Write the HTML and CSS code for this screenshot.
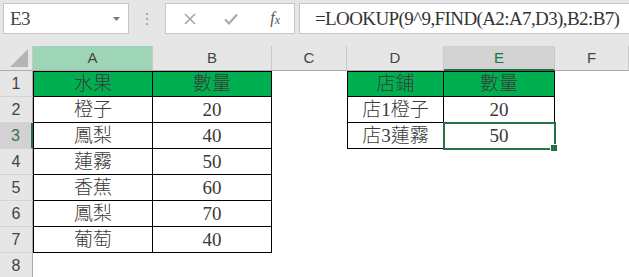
FILE: index.html
```html
<!DOCTYPE html>
<html lang="zh-Hant">
<head>
	<meta charset="UTF-8">
	<title>LOOKUP</title>
	<link rel="stylesheet" href="styles.css">
</head>
<body>
	<div class="topbar">
		<div class="namebox">
			<span class="ref">E3</span>
			<svg class="drop" width="7" height="4" viewBox="0 0 7 4"><path d="M0 0H7L3.5 4Z" fill="#7a7a7a"/></svg>
		</div>
		<div class="grip"><i></i><i></i><i></i></div>
		<div class="fbtns">
			<svg width="12" height="12" viewBox="0 0 12 12"><path d="M1 1L11 11M11 1L1 11" stroke="#a6a6a6" stroke-width="1.6"/></svg>
			<svg width="14" height="12" viewBox="0 0 14 12"><path d="M1 6.5L5 10.5L13 1.5" stroke="#a6a6a6" stroke-width="2" fill="none"/></svg>
			<span class="fx">f<sub>x</sub></span>
		</div>
		<div class="formula">=LOOKUP(9^9,FIND(A2:A7,D3),B2:B7)</div>
	</div>

	<div class="sheet">
		<!-- 欄標題 -->
		<div class="corner"><svg width="18" height="18" viewBox="0 0 18 18"><path d="M18 0V18H0Z" fill="#b5b5b5"/></svg></div>
		<div class="colhd sel-a">A</div>
		<div class="colhd">B</div>
		<div class="colhd">C</div>
		<div class="colhd">D</div>
		<div class="colhd cur">E</div>
		<div class="colhd">F</div>

		<!-- 1 -->
		<div class="rowhd">1</div>
		<div class="cell t l top head">水果</div>
		<div class="cell t top head">數量</div>
		<div class="cell"></div>
		<div class="cell t l top head">店鋪</div>
		<div class="cell t top head">數量</div>
		<div class="cell"></div>

		<!-- 2 -->
		<div class="rowhd">2</div>
		<div class="cell t l">橙子</div>
		<div class="cell t">20</div>
		<div class="cell"></div>
		<div class="cell t l">店1橙子</div>
		<div class="cell t">20</div>
		<div class="cell"></div>

		<!-- 3 -->
		<div class="rowhd cur">3</div>
		<div class="cell t l">鳳梨</div>
		<div class="cell t">40</div>
		<div class="cell"></div>
		<div class="cell t l">店3蓮霧</div>
		<div class="cell t active">50</div>
		<div class="cell"></div>

		<!-- 4 -->
		<div class="rowhd">4</div>
		<div class="cell t l">蓮霧</div>
		<div class="cell t">50</div>
		<div class="cell"></div>
		<div class="cell"></div>
		<div class="cell"></div>
		<div class="cell"></div>

		<!-- 5 -->
		<div class="rowhd">5</div>
		<div class="cell t l">香蕉</div>
		<div class="cell t">60</div>
		<div class="cell"></div>
		<div class="cell"></div>
		<div class="cell"></div>
		<div class="cell"></div>

		<!-- 6 -->
		<div class="rowhd">6</div>
		<div class="cell t l">鳳梨</div>
		<div class="cell t">70</div>
		<div class="cell"></div>
		<div class="cell"></div>
		<div class="cell"></div>
		<div class="cell"></div>

		<!-- 7 -->
		<div class="rowhd">7</div>
		<div class="cell t l">葡萄</div>
		<div class="cell t">40</div>
		<div class="cell"></div>
		<div class="cell"></div>
		<div class="cell"></div>
		<div class="cell"></div>

		<!-- 8 -->
		<div class="rowhd">8</div>
		<div class="cell"></div>
		<div class="cell"></div>
		<div class="cell"></div>
		<div class="cell"></div>
		<div class="cell"></div>
		<div class="cell"></div>
	</div>
</body>
</html>
```

FILE: styles.css
```css
*{
	padding: 0;
	margin: 0;
	box-sizing: border-box;
}
body{
	background: #fff;
	overflow: hidden;
	font-family: "Liberation Serif", "Noto Sans CJK TC", serif;
}

/* 公式列 */
.topbar{
	height: 46px;
	background: #e6e6e6;
	display: flex;
	align-items: flex-start;
	padding: 3px 0 0 3px;
}
.namebox{
	width: 126px;
	height: 31px;
	background: #fff;
	border: 1px solid #c6c6c6;
	display: flex;
	align-items: center;
	justify-content: space-between;
	padding: 0 8px 0 6px;
}
.ref{
	font-size: 19px;
	color: #444;
	letter-spacing: -0.5px;
}
.grip{
	width: 36px;
	height: 31px;
	display: flex;
	flex-direction: column;
	align-items: center;
	justify-content: center;
	gap: 3px;
}
.grip i{
	display: block;
	width: 2px;
	height: 2px;
	background: #a8a8a8;
}
.fbtns{
	width: 130px;
	height: 31px;
	background: #fff;
	border: 1px solid #c6c6c6;
	display: flex;
	align-items: center;
	padding: 0 14px 0 18px;
	gap: 28px;
}
.fx{
	margin-left: auto;
	font-style: italic;
	font-size: 16px;
	color: #555;
	font-family: "Liberation Serif", serif;
}
.fx sub{
	font-size: 12px;
	vertical-align: -1px;
}
.formula{
	flex: 1;
	height: 31px;
	margin-left: 4px;
	background: #fff;
	border: 1px solid #c6c6c6;
	border-right: 0;
	padding-left: 15px;
	font-size: 19px;
	line-height: 29px;
	letter-spacing: -0.6px;
	color: #333;
	white-space: nowrap;
}

/* 工作表 */
.sheet{
	display: grid;
	grid-template-columns: 33px 120px 119px 75px 97px 111px 1fr;
	grid-template-rows: 25px;
	grid-auto-rows: 26px;
}
.corner{
	background: #e6e6e6;
	border-right: 1px solid #c8c8c8;
	border-bottom: 1px solid #ababab;
	display: flex;
	align-items: flex-end;
	justify-content: flex-end;
	padding: 0 4px 3px 0;
}
.colhd{
	background: #e6e6e6;
	border-right: 1px solid #c8c8c8;
	border-bottom: 1px solid #ababab;
	font-family: "Liberation Sans", sans-serif;
	font-size: 15px;
	color: #444;
	text-align: center;
	line-height: 24px;
}
.colhd.sel-a{
	background: #9fd5b7;
}
.colhd.cur{
	background: #d2d2d2;
	border-bottom: 2px solid #217346;
	color: #217346;
}
.rowhd{
	background: #e6e6e6;
	border-right: 1px solid #ababab;
	border-bottom: 1px solid #d4d4d4;
	font-family: "Liberation Sans", sans-serif;
	font-size: 16px;
	color: #444;
	text-align: center;
	line-height: 26px;
}
.rowhd.cur{
	background: #d2d2d2;
	border-right: 2px solid #217346;
	color: #3c6e50;
}
.cell{
	background: #fff;
	font-size: 19px;
	font-weight: 300;
	color: #3a3a3a;
	text-align: center;
	line-height: 25px;
	white-space: nowrap;
}
.cell.t{
	border-right: 1px solid #000;
	border-bottom: 1px solid #000;
}
.cell.l{
	border-left: 1px solid #000;
}
.cell.top{
	border-top: 1px solid #000;
	line-height: 24px;
}
.cell.head{
	background: #00b050;
}
.cell.active{
	position: relative;
	outline: 2px solid #217346;
	outline-offset: -1px;
}
.cell.active::after{
	content: "";
	position: absolute;
	right: -4px;
	bottom: -4px;
	width: 6px;
	height: 6px;
	background: #217346;
	border: 1px solid #fff;
}
```
